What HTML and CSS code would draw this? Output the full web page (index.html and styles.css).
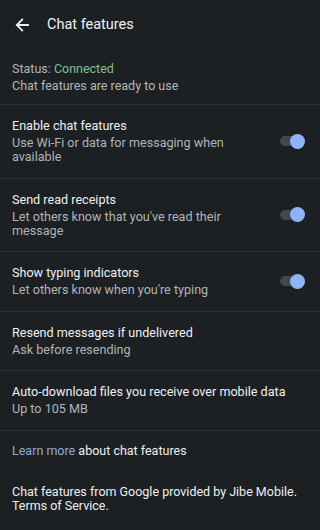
FILE: index.html
```html
<!DOCTYPE html>
<html lang="en">
<head>
<meta charset="utf-8">
<title>Chat features</title>
<link rel="stylesheet" href="styles.css">
</head>
<body>
<div class="screen">
  <header class="topbar">
    <svg class="back" width="14" height="14" viewBox="0 0 14 14" aria-hidden="true">
      <path d="M13 7H2M7.2 1.6L1.8 7l5.4 5.4" fill="none" stroke="#eceef0" stroke-width="1.8" stroke-linecap="square"/>
    </svg>
    <h1 class="title">Chat features</h1>
  </header>

  <section class="status">
    <div class="line">Status: <span class="ok">Connected</span></div>
    <div class="line">Chat features are ready to use</div>
  </section>

  <div class="row">
    <div class="text">
      <div class="label">Enable chat features</div>
      <div class="sub">Use Wi-Fi or data for messaging when available</div>
    </div>
    <div class="switch"><span class="track"></span><span class="thumb"></span></div>
  </div>

  <div class="row">
    <div class="text">
      <div class="label">Send read receipts</div>
      <div class="sub">Let others know that you've read their message</div>
    </div>
    <div class="switch"><span class="track"></span><span class="thumb"></span></div>
  </div>

  <div class="row">
    <div class="text">
      <div class="label">Show typing indicators</div>
      <div class="sub">Let others know when you're typing</div>
    </div>
    <div class="switch"><span class="track"></span><span class="thumb"></span></div>
  </div>

  <div class="row">
    <div class="text">
      <div class="label">Resend messages if undelivered</div>
      <div class="sub">Ask before resending</div>
    </div>
  </div>

  <div class="row">
    <div class="text">
      <div class="label">Auto-download files you receive over mobile data</div>
      <div class="sub">Up to 105 MB</div>
    </div>
  </div>

  <section class="learn">
    <span class="link">Learn more</span> about chat features
  </section>

  <section class="footer">
    Chat features from Google provided by Jibe Mobile. Terms of Service.
  </section>
</div>
</body>
</html>
```

FILE: styles.css
```css
html, body {
  margin: 0;
  padding: 0;
  background: #1c2023;
}
body {
  font-family: Roboto, "Noto Sans", "Liberation Sans", sans-serif;
  color: #eceef0;
  width: 320px;
  height: 530px;
  overflow: hidden;
}
.screen {
  display: flex;
  flex-direction: column;
}
.topbar {
  height: 48px;
  display: flex;
  align-items: center;
  padding-left: 15px;
  box-sizing: border-box;
  padding-top: 1px;
}
.back {
  display: block;
  margin-right: 18px;
}
.title {
  margin: 0;
  font-size: 14.5px;
  line-height: 20px;
  font-weight: 400;
  color: #f0f1f2;
}
.status {
  padding: 12px 12px 10px;
  font-size: 12.5px;
  line-height: 17px;
  color: #b3b7bb;
  border-bottom: 1px solid #2c3135;
}
.ok {
  color: #80c192;
}
.row {
  display: flex;
  align-items: center;
  padding: 12px 15px 13.5px 12px;
  border-bottom: 1px solid #2c3135;
}
.text {
  flex: 1;
  min-width: 0;
}
.label {
  font-size: 12.6px;
  line-height: 18px;
  color: #eeeff0;
}
.sub {
  margin-top: 1px;
  font-size: 12.6px;
  line-height: 14px;
  color: #b0b4b7;
}
.switch {
  position: relative;
  width: 25px;
  height: 15px;
  flex: none;
  margin-left: 30px;
  margin-top: 1px;
}
.track {
  position: absolute;
  left: 0;
  top: 2.5px;
  width: 21px;
  height: 10px;
  border-radius: 5px;
  background: #414950;
}
.thumb {
  position: absolute;
  right: 0;
  top: 0;
  width: 15px;
  height: 15px;
  border-radius: 50%;
  background: #8cb4f7;
}
.learn {
  padding: 11px 12px 0;
  font-size: 12.5px;
  line-height: 17px;
  color: #eeeff0;
}
.link {
  color: #92aad6;
}
.footer {
  padding: 26px 12px 0;
  font-size: 12.5px;
  line-height: 14.5px;
  color: #eeeff0;
}
```
